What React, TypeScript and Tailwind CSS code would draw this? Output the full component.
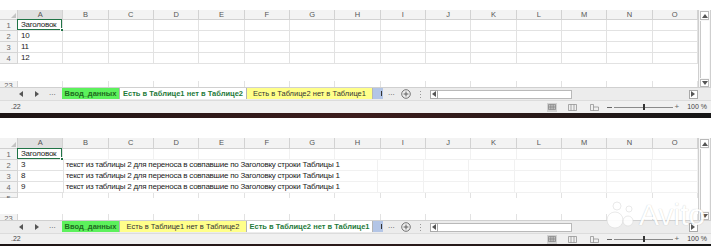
import React from 'react';
import clsx from 'clsx';

const COLS = ['A', 'B', 'C', 'D', 'E', 'F', 'G', 'H', 'I', 'J', 'K', 'L', 'M', 'N', 'O'];
const LONG = 'текст из таблицы 2 для переноса в совпавшие по Заголовку строки Таблицы 1';

type Row = { n: number; a: string; b?: string };

type PanelProps = {
  topPad: string;
  headerH: string;
  statusH: string;
  blankH: string;
  rows: Row[];
  partial5?: boolean;
  active: 2 | 3;
  faint?: boolean;
};

function Tri({ dir }: { dir: 'l' | 'r' | 'u' | 'd' }) {
  const pts = { l: '4,0 4,6 0,3', r: '0,0 0,6 4,3', u: '0,4 6,4 3,0', d: '0,0 6,0 3,4' }[dir];
  const w = dir === 'l' || dir === 'r' ? 4 : 6;
  const h = dir === 'l' || dir === 'r' ? 6 : 4;
  return (
    <svg width={w} height={h} viewBox={`0 0 ${w} ${h}`} className="block">
      <polygon points={pts} fill="#555" />
    </svg>
  );
}

function Panel({ topPad, headerH, statusH, blankH, rows, partial5, active, faint }: PanelProps) {
  const line = faint ? 'border-[#f1f1f1]' : 'border-[#e2e2e2]';
  const rowHead = 'w-[18px] shrink-0 bg-[#f3f3f3] border-r border-b border-[#d5d5d5] text-center text-[7.5px] leading-[11px] text-[#666]';

  return (
    <div className="w-[711px]">
      <div className={topPad} />

      {/* GRID + VERTICAL SCROLLBAR */}
      <div className="flex">
        <div className="w-[698px] flex flex-col">
          {/* column headers */}
          <div className={clsx('flex', headerH)}>
            <div className="w-[18px] shrink-0 bg-[#f3f3f3] border-r border-b border-[#cfcfcf] flex items-end justify-end pr-[1px] pb-[1px]">
              <svg width="5" height="5" viewBox="0 0 5 5" className="block">
                <polygon points="5,0 5,5 0,5" fill="#c4c4c4" />
              </svg>
            </div>
            {COLS.map((c, i) => (
              <div
                key={c}
                className={clsx(
                  'flex-1 min-w-0 border-r border-b border-[#d2d2d2] text-center text-[7.5px] text-[#555] flex items-center justify-center',
                  i === 0 ? 'bg-[#e0e0e0]' : 'bg-[#f3f3f3]'
                )}
              >
                {c}
              </div>
            ))}
          </div>

          {/* data rows */}
          {rows.map(r => (
            <div key={r.n} className="flex h-[11px]">
              <div className={clsx(rowHead, r.n === 1 && 'bg-[#e0e0e0]')}>{r.n}</div>
              {COLS.map((c, i) => {
                const underText = !!r.b && i >= 1 && i <= 6;
                return (
                  <div
                    key={c}
                    className={clsx(
                      'flex-1 min-w-0 border-b whitespace-nowrap text-[8px] tracking-[-0.25px] leading-[10px] text-[#222] relative',
                      underText ? 'border-transparent' : 'border-r',
                      i === 0 ? 'border-[#e2e2e2]' : line,
                      underText && 'border-b-[#f1f1f1]'
                    )}
                  >
                    {i === 0 && <span className="pl-[3px]">{r.a}</span>}
                    {i === 1 && r.b && <span className="pl-[2px]">{r.b}</span>}
                    {i === 0 && r.n === 1 && (
                      <>
                        <div className="absolute -left-[1px] -top-[1px] right-0 bottom-0 border-[1.5px] border-[#217346]" />
                        <div className="absolute -right-[2px] -bottom-[2px] w-[4px] h-[4px] bg-[#217346] border border-white" />
                      </>
                    )}
                  </div>
                );
              })}
            </div>
          ))}

          {partial5 && (
            <div className="flex h-[5px] overflow-hidden">
              <div className={rowHead}>5</div>
              {COLS.map(c => (
                <div key={c} className="flex-1 min-w-0 border-r border-[#e2e2e2]" />
              ))}
            </div>
          )}

          <div className={blankH} />

          {/* row 23, cut */}
          <div className="flex h-[6px] overflow-hidden">
            <div className="w-[18px] shrink-0 bg-[#f3f3f3] border-r border-[#d5d5d5] text-center text-[7.5px] leading-[9px] text-[#666]">23</div>
            {COLS.map(c => (
              <div key={c} className="flex-1 min-w-0 border-r border-[#e2e2e2]" />
            ))}
          </div>
        </div>

        <div className="w-[13px] flex flex-col bg-[#f7f7f7] border-l border-r border-[#cfcfcf]">
          <div className="h-[9px] mx-[1px] mt-[1px] bg-white border border-[#b9b9b9] flex items-center justify-center">
            <Tri dir="u" />
          </div>
          <div className="flex-1 mx-[1px] my-[1px] bg-white border-l border-[#c9c9c9]" />
          <div className="h-[8px] mx-[1px] bg-white border border-[#b9b9b9] flex items-center justify-center">
            <Tri dir="d" />
          </div>
        </div>
      </div>

      {/* SHEET TABS */}
      <div className="flex h-[13px] bg-[#ececec] border-t border-[#d0d0d0] text-[7.5px] leading-none">
        <div className="w-[62px] shrink-0 flex items-center">
          <div className="ml-[19px]"><Tri dir="l" /></div>
          <div className="ml-[12px]"><Tri dir="r" /></div>
          <div className="ml-[10px] text-[#555] text-[8px] -mt-[3px]">...</div>
        </div>
        <div className="w-[58px] shrink-0 mb-[1px] bg-[#5cf15c] text-[#1e6a1e] font-bold flex items-center justify-center border-r border-[#b5b5b5]">
          Ввод_данных
        </div>
        <div
          className={clsx(
            'w-[127px] shrink-0 mb-[1px] flex items-center justify-center border-r border-[#b5b5b5]',
            active === 2 ? 'bg-white text-[#1e7a3a] font-bold' : 'bg-[#ffff8a] text-[#333]'
          )}
        >
          Есть в Таблице1 нет в Таблице2
        </div>
        <div
          className={clsx(
            'w-[126px] shrink-0 mb-[1px] flex items-center justify-center border-r border-[#b5b5b5]',
            active === 3 ? 'bg-white text-[#1e7a3a] font-bold' : 'bg-[#ffff8a] text-[#333]'
          )}
        >
          Есть в Таблице2 нет в Таблице1
        </div>
        <div className="w-[10px] shrink-0 mb-[1px] bg-[#b3c5e6] flex items-center justify-end pr-[1px]">
          <div className="w-[1.5px] h-[5px] bg-[#333]" />
        </div>
        <div className="ml-[5px] text-[#555] text-[8px] self-center -mt-[3px]">...</div>
        <svg width="10" height="10" viewBox="0 0 10 10" className="ml-[6px] self-center block">
          <circle cx="5" cy="5" r="4.3" fill="none" stroke="#666" strokeWidth="0.9" />
          <path d="M5 2.6v4.8M2.6 5h4.8" stroke="#555" strokeWidth="0.9" />
        </svg>
        <div className="ml-[9px] self-center flex flex-col gap-[2px]">
          <div className="w-[1px] h-[1px] bg-[#999]" />
          <div className="w-[1px] h-[1px] bg-[#999]" />
          <div className="w-[1px] h-[1px] bg-[#999]" />
        </div>
        {/* horizontal scrollbar */}
        <div className="ml-[9px] w-[268px] self-center flex h-[9px]">
          <div className="w-[8px] bg-white border border-[#a9a9a9] flex items-center justify-center">
            <Tri dir="l" />
          </div>
          <div className="w-[134px] bg-white border-t border-b border-r border-[#b9b9b9]" />
          <div className="flex-1" />
          <div className="w-[9px] bg-white border border-[#a9a9a9] flex items-center justify-center">
            <Tri dir="r" />
          </div>
        </div>
      </div>

      {/* STATUS BAR */}
      <div className={clsx('flex items-center bg-[#f0f0f0] border-t border-[#dcdcdc] text-[7px] text-[#444]', statusH)}>
        <div className="pl-[11px]">.22</div>
        <div className="ml-auto pr-[4px] flex items-center">
          <div className="w-[10px] h-[9px] bg-[#d2d2d2] flex items-center justify-center">
            <svg width="8" height="6" viewBox="0 0 8 6" className="block">
              <path d="M0.5 0.5h7v5h-7zM0.5 2.2h7M0.5 3.8h7M2.8 0.5v5M5.2 0.5v5" fill="none" stroke="#777" strokeWidth="0.6" />
            </svg>
          </div>
          <svg width="9" height="7" viewBox="0 0 9 7" className="ml-[11px] block">
            <path d="M0.5 0.5h8v6h-8zM3 0.5v6M6 0.5v6" fill="none" stroke="#888" strokeWidth="0.7" />
          </svg>
          <svg width="9" height="7" viewBox="0 0 9 7" className="ml-[13px] block">
            <path d="M0.5 6.5v-6h3v2.5h5v3.5zM3.5 3v3.5" fill="none" stroke="#888" strokeWidth="0.7" />
          </svg>
          <div className="ml-[8px] w-[5px] h-[1px] bg-[#666]" />
          <div className="ml-[2px] w-[59px] h-[6px] relative flex items-center">
            <div className="w-full h-[1px] bg-[#8a8a8a]" />
            <div className="absolute left-[29px] top-0 w-[2px] h-[6px] bg-[#333]" />
          </div>
          <div className="ml-[1px] text-[8px] text-[#666] leading-none">+</div>
          <div className="ml-[8px]">100 %</div>
        </div>
      </div>
    </div>
  );
}

export default function App() {
  return (
    <div className="relative w-[720px] h-[246px] overflow-hidden bg-white font-['Liberation_Sans',Arial,sans-serif]">
      <Panel
        topPad="h-[10px]"
        headerH="h-[10px]"
        statusH="h-[13px]"
        blankH="h-[17px]"
        active={2}
        rows={[
          { n: 1, a: 'Заголовок' },
          { n: 2, a: '10' },
          { n: 3, a: '11' },
          { n: 4, a: '12' },
        ]}
      />
      <div className="w-[711px] h-[5px] bg-linear-to-r from-[#1c1414] via-[#3c1c1c] to-[#161616]" />
      <Panel
        topPad="h-[20px]"
        headerH="h-[11px]"
        statusH="h-[11px]"
        blankH="h-[16px]"
        active={3}
        faint
        partial5
        rows={[
          { n: 1, a: 'Заголовок' },
          { n: 2, a: '3', b: LONG },
          { n: 3, a: '8', b: LONG },
          { n: 4, a: '9', b: LONG },
        ]}
      />
      <div className="w-[711px] h-[2px] bg-linear-to-r from-[#1c1414] via-[#2c1a1a] to-[#161616]" />

      {/* watermark */}
      <div className="absolute left-[606px] top-[200px] flex items-center opacity-90">
        <svg width="32" height="30" viewBox="0 0 32 30" className="block">
          <circle cx="9" cy="20" r="8" fill="white" stroke="#d8d8d8" strokeWidth="0.6" />
          <circle cx="22" cy="21" r="5" fill="white" stroke="#d8d8d8" strokeWidth="0.6" />
          <circle cx="11" cy="6" r="4" fill="white" stroke="#d8d8d8" strokeWidth="0.6" />
          <circle cx="23" cy="9" r="3" fill="white" stroke="#d8d8d8" strokeWidth="0.6" />
        </svg>
        <span className="ml-[1px] text-[30px] leading-none text-white [text-shadow:0_0_1px_rgba(0,0,0,0.25)] font-['Liberation_Sans',Arial,sans-serif]">
          Avito
        </span>
      </div>
    </div>
  );
}
